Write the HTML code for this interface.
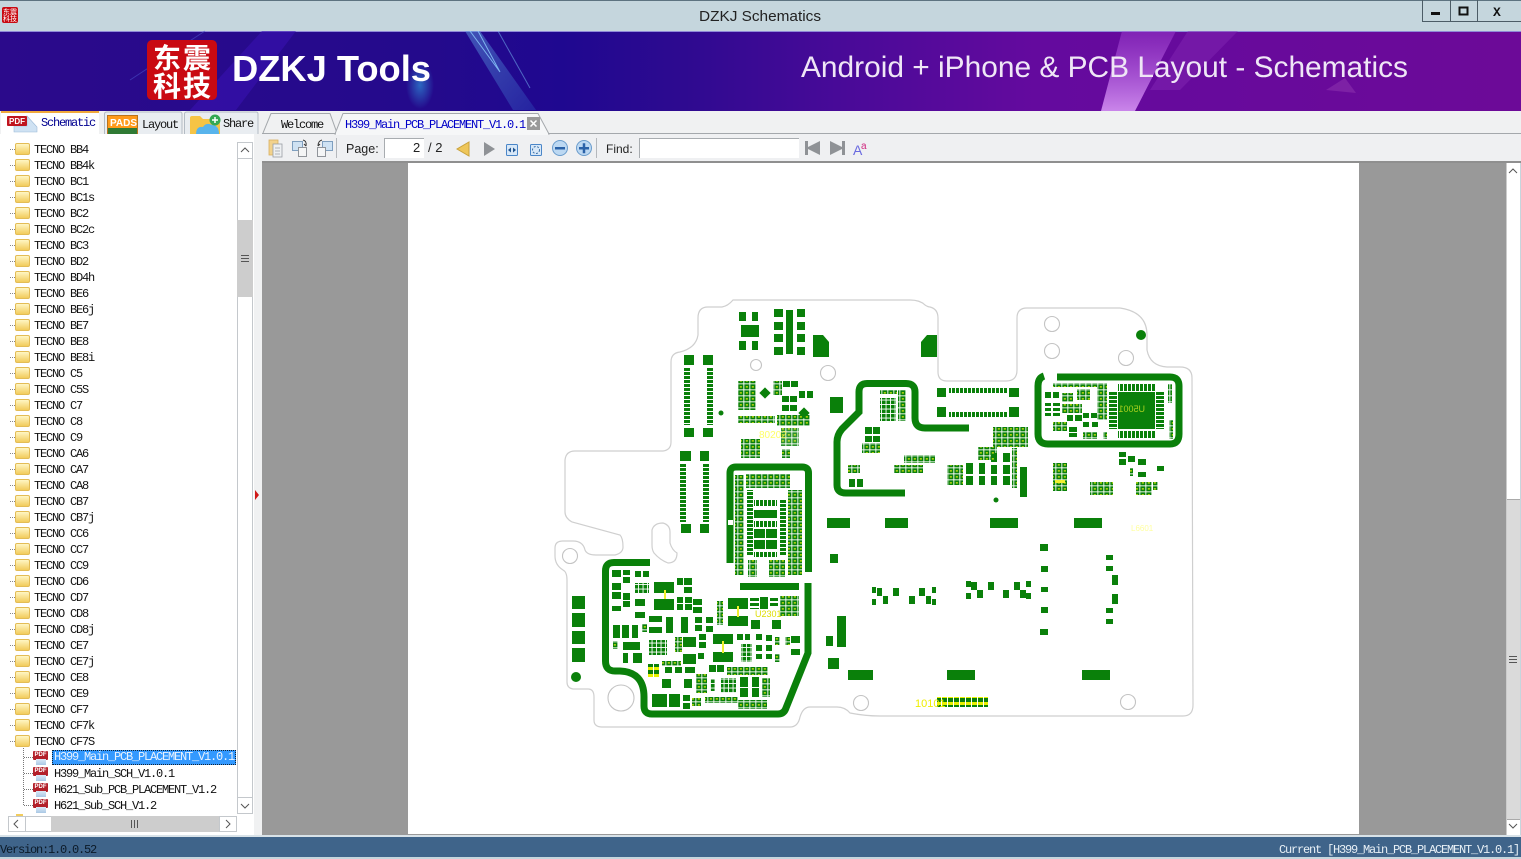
<!DOCTYPE html>
<html><head><meta charset="utf-8"><title>DZKJ Schematics</title>
<style>
html,body{margin:0;padding:0;width:1521px;height:859px;overflow:hidden;background:#f0f0f0}
#p{position:absolute;left:0;top:0;width:1521px;height:859px;overflow:hidden}
svg{position:absolute;left:0;top:0}
.a{position:absolute}
#tree{position:absolute;left:0;top:142px;width:237px;height:672px;overflow:hidden;font:12px/16px "Liberation Mono",monospace;letter-spacing:-1.2px;color:#111}
.r{height:16px;padding-left:34px;position:relative;white-space:pre}
.r:before{content:"";position:absolute;left:10px;top:7px;width:5px;border-top:1px dotted #888}
.r:after{content:"";position:absolute;left:15px;top:1px;width:13px;height:10px;background:linear-gradient(#fff6c4,#f2cc5c);border:1px solid #e3bc55;border-radius:2px}
.c{height:16px;padding-left:54px;position:relative;white-space:pre}
.c:before{content:"";position:absolute;left:24px;top:7px;width:9px;border-top:1px dotted #777}
.pdf{position:absolute;left:33px;top:1px;width:15px;height:9px;background:#b3202a;color:#fff;font:bold 6px/9px "Liberation Sans",sans-serif;letter-spacing:0;text-align:center;border-radius:1px}
.pg{position:absolute;left:36px;top:9px;width:10px;height:6px;background:linear-gradient(#dbe9f6,#a9c8e4)}
.s{background:#3399ff;color:#e8f2ff;outline:1px dotted #123;outline-offset:-1px;position:absolute;left:52px;top:0;width:182px;height:15px;padding-left:2px;line-height:15px}
.m{font:12px/16px "Liberation Mono",monospace;letter-spacing:-1.2px;white-space:pre;position:absolute}
.u{font:12.5px/16px "Liberation Sans",sans-serif;color:#222;position:absolute}
</style></head><body><div id="p">

<!-- title bar -->
<div class="a" style="left:0;top:0;width:1521px;height:31px;background:#c5d6dd;border-top:1px solid #5d7380;box-sizing:border-box"></div>

<!-- main chrome strips -->
<div class="a" style="left:0;top:111px;width:1521px;height:23px;background:#f0f1f2"></div>
<div class="a" style="left:0;top:134px;width:262px;height:702px;background:#fff"></div>
<div class="a" style="left:254px;top:134px;width:8px;height:702px;background:#f0f1f2"></div>
<div class="a" style="left:262px;top:134px;width:1259px;height:28px;background:#eff0f2"></div>
<div class="a" style="left:262px;top:133px;width:1259px;height:1px;background:#a4a8ac"></div>
<div class="a" style="left:262px;top:161px;width:1259px;height:2px;background:#8f8f8f"></div>
<div class="a" style="left:262px;top:163px;width:1244px;height:672px;background:#999"></div>
<div class="a" style="left:408px;top:163px;width:951px;height:671px;background:#fff"></div>
<div class="a" style="left:0;top:835px;width:1521px;height:2px;background:#d8e2e8"></div>
<div class="a" style="left:0;top:837px;width:1521px;height:20px;background:#3f648a"></div>
<div class="a" style="left:0;top:857px;width:1521px;height:2px;background:#c5d6dd"></div>
<div class="a" style="left:1506px;top:163px;width:15px;height:672px;background:#fff;border-left:1px solid #ccc;box-sizing:border-box"></div>
<div class="a" style="left:1507px;top:499px;width:13px;height:321px;background:#dadada;border-top:1px solid #aaa;border-bottom:1px solid #aaa;box-sizing:border-box"></div>
<div class="a" style="left:1520px;top:163px;width:1px;height:672px;background:#c5d6dd"></div>

<!-- tree -->
<div id="tree">
<div class="r">TECNO BB4</div><div class="r">TECNO BB4k</div><div class="r">TECNO BC1</div><div class="r">TECNO BC1s</div><div class="r">TECNO BC2</div><div class="r">TECNO BC2c</div><div class="r">TECNO BC3</div><div class="r">TECNO BD2</div><div class="r">TECNO BD4h</div><div class="r">TECNO BE6</div><div class="r">TECNO BE6j</div><div class="r">TECNO BE7</div><div class="r">TECNO BE8</div><div class="r">TECNO BE8i</div><div class="r">TECNO C5</div><div class="r">TECNO C5S</div><div class="r">TECNO C7</div><div class="r">TECNO C8</div><div class="r">TECNO C9</div><div class="r">TECNO CA6</div><div class="r">TECNO CA7</div><div class="r">TECNO CA8</div><div class="r">TECNO CB7</div><div class="r">TECNO CB7j</div><div class="r">TECNO CC6</div><div class="r">TECNO CC7</div><div class="r">TECNO CC9</div><div class="r">TECNO CD6</div><div class="r">TECNO CD7</div><div class="r">TECNO CD8</div><div class="r">TECNO CD8j</div><div class="r">TECNO CE7</div><div class="r">TECNO CE7j</div><div class="r">TECNO CE8</div><div class="r">TECNO CE9</div><div class="r">TECNO CF7</div><div class="r">TECNO CF7k</div><div class="r">TECNO CF7S</div>
<div class="c"><span class="pdf">PDF</span><span class="pg"></span><span class="s">H399_Main_PCB_PLACEMENT_V1.0.1</span></div>
<div class="c"><span class="pdf">PDF</span><span class="pg"></span>H399_Main_SCH_V1.0.1</div>
<div class="c"><span class="pdf">PDF</span><span class="pg"></span>H621_Sub_PCB_PLACEMENT_V1.2</div>
<div class="c"><span class="pdf">PDF</span><span class="pg"></span>H621_Sub_SCH_V1.2</div>
</div>
<div class="a" style="left:23px;top:748px;height:57px;border-left:1px dotted #777"></div>

<svg width="1521" height="859" viewBox="0 0 1521 859" xmlns="http://www.w3.org/2000/svg">
<defs>
<linearGradient id="bn" x1="0" x2="1" y1="0" y2="0">
<stop offset="0" stop-color="#2b0a8b"/><stop offset=".28" stop-color="#240a8c"/><stop offset=".37" stop-color="#1f0890"/><stop offset=".45" stop-color="#2e0a90"/><stop offset=".55" stop-color="#480a98"/><stop offset=".68" stop-color="#640a9e"/><stop offset="1" stop-color="#6c0a98"/>
</linearGradient>
<linearGradient id="pk" x1="0" x2="0" y1="0" y2="1"><stop offset="0" stop-color="#b050e0" stop-opacity=".35"/><stop offset="1" stop-color="#cf8cee" stop-opacity=".95"/></linearGradient>
<linearGradient id="tb" x1="0" x2="1" y1="0" y2="1"><stop offset="0" stop-color="#5f9fe0"/><stop offset="1" stop-color="#2a3cb0"/></linearGradient>
<radialGradient id="gl"><stop offset="0" stop-color="#2f8fd8" stop-opacity=".7"/><stop offset="1" stop-color="#2f8fd8" stop-opacity="0"/></radialGradient>
<pattern id="a" width="6" height="6" patternUnits="userSpaceOnUse"><rect x=".3" y=".3" width="5.100" height="5.100" fill="#0a800a"/><rect x="1.800" y="2" width="2.100" height="1.700" fill="#a6cf10"/></pattern>
<pattern id="b" width="4.500" height="4.500" patternUnits="userSpaceOnUse"><rect width="3.600" height="3.600" fill="#0a800a"/></pattern>
<pattern id="h" width="5" height="4" patternUnits="userSpaceOnUse"><rect width="5" height="3" fill="#0a800a"/></pattern>
<pattern id="v" width="4" height="5" patternUnits="userSpaceOnUse"><rect width="3" height="5" fill="#0a800a"/></pattern>
<pattern id="y" width="6" height="7" patternUnits="userSpaceOnUse"><rect width="5" height="7" fill="#0a800a"/><rect y="2" width="5" height="3" fill="#e8f000"/></pattern>
</defs>

<!-- banner -->
<rect x="0" y="31" width="1521" height="80" fill="url(#bn)"/>
<rect x="0" y="31" width="1521" height="1" fill="#8f8ad8"/>
<path d="M190 110 L262 31H296L236 110Z" fill="#3a12b4" opacity=".55"/>
<path d="M130 80 L205 31" stroke="#4a50c8" stroke-width="1" opacity=".6"/>
<ellipse cx="420" cy="85" rx="14" ry="24" fill="url(#gl)"/>
<path d="M465 31H480L536 110H513Z" fill="url(#tb)" opacity=".5"/>
<path d="M478 31L500 72 470 31" stroke="#8fd0ff" stroke-width="1" fill="none" opacity=".8"/>
<path d="M498 31L530 88" stroke="#7cc4f8" stroke-width="1" opacity=".5"/>
<path d="M1122 31H1176L1135 111H1101Z" fill="url(#pk)"/>
<path d="M1188 31H1238L1180 90H1150Z" fill="#8a2cb8" opacity=".4"/>
<path d="M1326 90L1345 78 1356 93Z" fill="#8a30ae" opacity=".6"/>
<rect x="147" y="40" width="70" height="60" rx="5" fill="#c90a12"/>
<g font-family="'Noto Sans CJK SC','WenQuanYi Zen Hei',sans-serif" font-size="28" font-weight="700" fill="#fff">
<text x="153" y="68">东</text><text x="183" y="68">震</text><text x="153" y="96">科</text><text x="183" y="96">技</text></g>
<text x="232" y="81" font-family="'Liberation Sans',sans-serif" font-weight="700" font-size="36" fill="#fff" textLength="199" lengthAdjust="spacingAndGlyphs">DZKJ Tools</text>
<text x="801" y="77" font-family="'Liberation Sans',sans-serif" font-size="30" fill="#efe6f6" textLength="607" lengthAdjust="spacingAndGlyphs">Android + iPhone &amp; PCB Layout - Schematics</text>

<!-- title -->
<rect x="2" y="7" width="16" height="16" rx="2" fill="#c90a12"/>
<g font-family="'Noto Sans CJK SC',sans-serif" font-size="7" fill="#fff"><text x="3" y="14">东</text><text x="10" y="14">震</text><text x="3" y="21">科</text><text x="10" y="21">技</text></g>
<text x="699" y="21" font-family="'Liberation Sans',sans-serif" font-size="15" fill="#222" textLength="122" lengthAdjust="spacingAndGlyphs">DZKJ Schematics</text>
<path d="M1422.5 0V21.5H1521M1450.5 0V21M1477.5 0V21" stroke="#4c5c66" fill="none"/>
<rect x="1431" y="12" width="9" height="3" fill="#111"/>
<rect x="1459.5" y="7.5" width="8" height="7" fill="none" stroke="#111" stroke-width="2"/>
<text x="1493" y="16" font-family="'Liberation Mono',monospace" font-weight="700" font-size="13" fill="#111">X</text>

<!-- left tabs -->
<path d="M1 134V113Q1 111 3 111H98Q99 111 99 113V134Z" fill="#fff"/>
<path d="M1 112H99" stroke="#f0a83c" stroke-width="2"/>
<path d="M27 116L37 127V132H14V126H27Z" fill="#cfe2f3" stroke="#9dbbd8" stroke-width=".6"/>
<rect x="7" y="116" width="20" height="10" rx="1" fill="#c0141e"/>
<text x="9" y="124" font-family="'Liberation Sans',sans-serif" font-weight="700" font-size="8" fill="#fff">PDF</text>
<path d="M104.5 134V114Q104.5 112 107 112H180Q182 112 182 114V134" fill="#e9edf1" stroke="#b4bcc4"/>
<rect x="107" y="115" width="31" height="19" fill="#b9731c"/>
<rect x="108" y="116" width="29" height="12" fill="#ff9a1a"/>
<text x="110" y="126" font-family="'Liberation Sans',sans-serif" font-weight="700" font-size="10" fill="#fff">PADS</text>
<rect x="108" y="128" width="29" height="6" fill="#2f7a34"/>
<path d="M184.500 134V114Q184.500 112 187 112H256Q258 112 258 114V134" fill="#e9edf1" stroke="#b4bcc4"/>
<path d="M190 134V118Q190 116 192 116H200L203 119H220V134Z" fill="#f6c445"/>
<path d="M196 134Q196 126 203 127 206 122 212 125 219 125 219 134Z" fill="#58b4ec"/>
<circle cx="215" cy="120" r="5.500" fill="#33a852"/><path d="M212 120H218M215 117V123" stroke="#fff" stroke-width="1.500"/>

<!-- doc tabs -->
<path d="M263 133L271 113.500H330L337 133" fill="#f0f1f2" stroke="#a4a8ac"/>
<path d="M335 134L343 113.500H538L549 134Z" fill="#f6f7f8" stroke="#a4a8ac"/>
<path d="M336 134H548" stroke="#f6f7f8" stroke-width="2"/>
<rect x="527" y="117" width="13" height="13" fill="#9a9a9a"/><path d="M530.500 120.500L536.500 126.500M536.500 120.500L530.500 126.500" stroke="#fff" stroke-width="1.500"/>

<!-- toolbar icons -->
<g>
<rect x="269" y="140" width="9" height="15" fill="#f2d28c" stroke="#d8b060" stroke-width=".8"/>
<rect x="273" y="144" width="9" height="13" fill="#eef0f2" stroke="#9a9ea4" stroke-width=".8"/>
<path d="M275 148H280M275 151H280M275 154H280" stroke="#b0b4b8"/>
<rect x="292.500" y="141.500" width="10" height="9" fill="#cfe2f3" stroke="#7f9fbf"/>
<rect x="298.500" y="147.500" width="8" height="9" fill="#f4f5f6" stroke="#90949a"/>
<path d="M303 140Q307 141 306 146M306 146L304 144" fill="none" stroke="#333"/>
<rect x="322.500" y="141.500" width="10" height="9" fill="#cfe2f3" stroke="#7f9fbf"/>
<rect x="317.500" y="147.500" width="8" height="9" fill="#f4f5f6" stroke="#90949a"/>
<path d="M322 140Q318 141 318 146M318 146L320 144" fill="none" stroke="#333"/>
<path d="M336.500 138V158M596.500 138V158" stroke="#b5b8bc"/>
<rect x="384" y="138" width="40" height="20" fill="#fff"/><path d="M384.500 158V138.500H424" stroke="#a8acb0" fill="none"/>
<path d="M469 142V156L457 149Z" fill="#eec65a" stroke="#c9a23c"/>
<path d="M484 142V156L495 149Z" fill="#8f9296"/>
<rect x="506.500" y="144.500" width="11" height="11" rx="1" fill="#d8e8f8" stroke="#4a86c8"/><path d="M508 150L511 147.500V152.500ZM516 150L513 147.500V152.500Z" fill="#22558f"/>
<rect x="530.500" y="144.500" width="11" height="11" rx="1" fill="#d8e8f8" stroke="#4a86c8"/><circle cx="536" cy="150" r="3.500" fill="none" stroke="#3a70a8" stroke-dasharray="2 1.500"/>
<circle cx="560" cy="148" r="7.500" fill="#bcd8f2" stroke="#6a9ccc"/><rect x="555" y="147" width="10" height="2.500" fill="#2a62a8"/>
<circle cx="584" cy="148" r="7.500" fill="#bcd8f2" stroke="#6a9ccc"/><path d="M579 148.200H589M584 143.200V153.200" stroke="#2a62a8" stroke-width="2.500"/>
<rect x="639" y="138" width="160" height="20" fill="#fff"/><path d="M639.500 158V138.500H799" stroke="#a8acb0" fill="none"/>
<path d="M805 141H808V147L820 141V155L808 149V155H805Z" fill="#8f9296"/>
<path d="M845 141H842V147L830 141V155L842 149V155H845Z" fill="#8f9296"/>
<text x="853" y="155" font-family="'Liberation Sans',sans-serif" font-size="14" fill="#6a6ae0">A</text>
<text x="861" y="149" font-family="'Liberation Sans',sans-serif" font-size="10" fill="#d02a80">a</text>
</g>

<!-- tree scrollbars -->
<rect x="237.500" y="142.500" width="15" height="671" fill="#fff" stroke="#c4c8cc"/>
<rect x="238" y="158" width="14" height="1" fill="#c4c8cc"/>
<rect x="238" y="797" width="14" height="1" fill="#c4c8cc"/>
<rect x="237" y="220" width="16" height="77" fill="#cdcdcd"/>
<path d="M241 255.500H249M241 258.500H249M241 261.500H249" stroke="#555"/>
<path d="M241 152L245 148 249 152M241 804L245 808 249 804" stroke="#555" fill="none"/>
<rect x="8.500" y="816.500" width="228" height="15" fill="#fff" stroke="#c4c8cc"/>
<rect x="51" y="816" width="168" height="16" fill="#cdcdcd"/>
<path d="M131.500 820V828M134.500 820V828M137.500 820V828" stroke="#555"/>
<path d="M25.500 817V831M219.500 817V831" stroke="#c4c8cc"/>
<path d="M18 820L14 824 18 828M226 820L230 824 226 828" stroke="#555" fill="none"/>
<rect x="16" y="814" width="7" height="2" fill="#f2cc5c"/>
<path d="M255 490L259 495 255 500Z" fill="#d01818"/>

<!-- viewer scrollbar -->
<path d="M1509 173L1513 169 1517 173M1509 824L1513 828 1517 824" stroke="#555" fill="none"/>
<path d="M1509 656.500H1517M1509 659.500H1517M1509 662.500H1517" stroke="#555"/>

<!-- PCB -->
<g style="filter:blur(.35px)">
<path fill="none" stroke="#cfcfcf" stroke-width="1.200" d="M733 300H910Q920 300 925 305 928 307 930 307 938 309 938 318V372Q938 381 947 381H1006Q1017 381 1017 370V318Q1017 308 1027 308H1120Q1147 312 1147 335V350Q1150 366 1167 367H1180Q1192 367 1192 378L1193 705Q1193 716 1183 716H880Q865 716 850 713 845 707 837 707H810Q803 707 800 717 798 727 790 727H602Q594 727 594 720V697Q594 689 588 689H573Q567 688 567 682V580Q567 572 563 570 555 565 555 556V548Q555 541 563 541H573Q583 541 585 550 587 555 596 555H615Q623 553 623 547 623 538 620 535L572 522Q565 518 565 512V460Q566 451 575 451H663Q671 450 671 442V362Q671 353 680 352 696 348 698 335V318Q698 307 708 307H722Q728 306 733 300Z"/>
<path fill="none" stroke="#cfcfcf" stroke-width="1.200" d="M652 530Q654 523 663 523 670 525 670 532V543Q672 550 677 553 677 563 668 563 660 560 654 553 652 550 652 545Z"/>
<g fill="#fff" stroke="#c4c4c4" stroke-width="1.100">
<circle cx="756" cy="365" r="5.500"/><circle cx="828" cy="373" r="7.500"/><circle cx="1052" cy="324" r="7.500"/><circle cx="1052" cy="351" r="7.500"/><circle cx="1126" cy="358" r="7.500"/><circle cx="570" cy="556" r="7.500"/><circle cx="621" cy="698" r="13"/><circle cx="861" cy="703" r="7.500"/><circle cx="1128" cy="702" r="7.500"/>
</g>
<circle cx="1141" cy="335" r="5" fill="#0a800a"/>
<circle cx="721" cy="413" r="2.500" fill="#0a800a"/>
<circle cx="576" cy="677" r="5" fill="#0a800a"/>
<circle cx="996" cy="500" r="2.500" fill="#0a800a"/>

<!-- thick traces -->
<g fill="none" stroke="#0a800a" stroke-width="7">
<path d="M730 563V473Q730 467 736 467H802Q808.500 467 808.500 473V572"/>
<path d="M650 562.500H614Q605.500 562.500 605.500 571V661Q605.500 671 615 671H620Q644 672 644 697V706Q644 714 652 714H778Q784 714 786 708L808 653V583"/>
<path d="M969 428H925Q915 428 915 418V392Q915 383.500 906 383.500H867Q859 383.500 859 392V412L842 429Q837 435 837 442V485Q837 493 846 493H905"/>
<path d="M1057 377H1170Q1179 377 1179 386V434Q1179 444 1170 444H1048Q1038 444 1038 434V386Q1038 378 1044 376"/>
</g>

<!-- solid pads -->
<path fill="#0a800a" d="M684 355h10v10h-10zM703 355h10v10h-10zM684 428h10v9h-10zM703 428h10v9h-10zM680 451h11v10h-11zM700 451h9v10h-9zM681 524h10v9h-10zM700 524h9v9h-9zM774 309h9v8h-9zM774 322h9v8h-9zM774 334h9v8h-9zM774 347h9v8h-9zM786 310h7v44h-7zM797 309h8v8h-8zM797 322h8v8h-8zM797 334h8v8h-8zM797 347h8v8h-8zM739 312h7v9h-7zM752 312h6v9h-6zM741 325h18v12h-18zM739 341h7v9h-7zM752 341h6v9h-6zM813 335h10l6 7v15h-16zM927 335h10v22h-16v-15zM783 381h7v6h-7zM791 381h7v6h-7zM782 396h7v6h-7zM790 396h7v6h-7zM782 405h7v6h-7zM790 405h7v6h-7zM799 391h6v7h-6zM807 391h6v7h-6zM830 397h13v16h-13z"/>
<path fill="#0a800a" d="M754 510h23v8h-23zM754 529h11v9h-11zM766 529h11v9h-11zM754 540h11v9h-11zM766 540h11v9h-11zM740 583h59v7h-59zM654 582h20v11h-20zM654 599h20v11h-20zM728 598h20v11h-20zM728 616h20v10h-20zM713 634h20v10h-20zM713 652h20v10h-20zM666 617h7v16h-7zM681 617h7v16h-7zM683 637h13v10h-13zM683 654h13v10h-13zM662 679h9v9h-9zM684 679h8v9h-8zM652 694h15v13h-15zM669 694h11v13h-11zM751 620h9v9h-9zM772 620h9v9h-9zM740 677h8v10h-8zM740 688h8v9h-8zM752 677h7v10h-7zM752 688h7v9h-7zM791 636h9v7h-9zM791 649h9v6h-9zM623 642h17v8h-17zM623 653h5v10h-5zM633 653h9v10h-9zM635 599h10v7h-10zM635 612h10v6h-10zM572 596h13v13h-13zM572 613h13v14h-13zM572 631h13v13h-13zM572 648h13v14h-13zM612 570h9v7h-9zM612 583h9v7h-9zM612 592h9v7h-9zM612 606h9v5h-9zM623 570h7v5h-7zM623 577h7v6h-7zM623 593h7v7h-7zM623 601h7v6h-7zM635 571h6v6h-6zM643 571h6v6h-6zM649 616h13v6h-13zM649 627h13v6h-13zM613 625h7v13h-7zM622 625h7v13h-7zM632 625h6v13h-6zM677 578h6v7h-6zM684 578h8v7h-8zM684 587h8v6h-8zM677 597h6v6h-6zM685 597h7v6h-7zM677 604h6v6h-6zM685 604h7v6h-7zM693 599h9v6h-9zM693 607h9v6h-9zM695 617h7v6h-7zM695 625h7v6h-7zM706 617h7v6h-7zM706 626h7v6h-7zM750 598h9v3h-9zM750 603h9v3h-9zM750 608h9v1h-9zM760 597h8v12h-8zM770 598h8v3h-8zM770 603h8v3h-8zM737 634h6v6h-6zM745 634h5v6h-5zM756 634h6v6h-6zM766 635h6v6h-6zM756 645h6v6h-6zM766 645h6v6h-6zM756 654h6v5h-6zM766 654h6v5h-6zM699 634h7v6h-7zM699 642h7v6h-7zM698 653h6v6h-6zM709 665h7v7h-7zM717 665h7v7h-7zM683 695h7v6h-7zM683 703h7v6h-7zM665 667h7v6h-7zM675 667h7v6h-7zM685 667h10v6h-10z"/>
<path fill="#0a800a" d="M827 518h23v10h-23zM830 554h8v9h-8zM837 616h9v31h-9zM826 636h7v10h-7zM828 658h11v11h-11zM848 670h25v10h-25zM885 518h23v10h-23zM990 518h28v10h-28zM1074 518h28v10h-28zM947 670h28v10h-28zM1082 670h28v10h-28zM1040 544h8v7h-8zM1041 566h7v6h-7zM1041 587h7v5h-7zM1041 607h7v6h-7zM1040 629h8v6h-8zM1106 555h7v5h-7zM1106 566h7v5h-7zM1112 575h6v10h-6zM1112 594h6v10h-6zM1106 608h7v5h-7zM1106 619h7v5h-7zM966 581h5v6h-5zM971 582h6v8h-6zM966 593h5v6h-5zM977 590h6v8h-6zM988 582h6v8h-6zM1003 590h6v8h-6zM1014 582h6v8h-6zM1020 590h6v8h-6zM1026 581h5v6h-5zM1026 593h5v6h-5zM883 596h5v8h-5zM893 588h6v8h-6zM909 596h6v8h-6zM919 588h6v8h-6zM926 596h5v8h-5zM932 587h4v6h-4zM932 599h4v6h-4zM872 587h4v6h-4zM877 588h5v8h-5zM872 599h4v6h-4z"/>
<path fill="#0a800a" d="M937 388h9v9h-9zM1009 388h10v9h-10zM937 407h9v10h-9zM1009 407h10v10h-10zM1118 392h37v37h-37zM1020 467h7v30h-7zM966 463h7v11h-7zM966 476h7v9h-7zM979 463h6v11h-6zM979 476h6v9h-6zM991 453h6v9h-6zM991 465h6v9h-6zM991 476h6v9h-6zM1003 453h7v9h-7zM1003 465h7v9h-7zM1003 476h7v9h-7zM1045 392h6v6h-6zM1053 392h6v6h-6zM1045 403h6v3h-6zM1045 408h6v3h-6zM1045 413h6v3h-6zM1053 403h7v3h-7zM1053 408h7v3h-7zM1053 413h7v3h-7zM1067 415h6v6h-6zM1075 415h7v6h-7zM1083 413h6v5h-6zM1091 413h6v5h-6zM1083 422h6v5h-6zM1092 422h6v5h-6zM1069 427h8v5h-8zM1069 433h8v4h-8zM1119 452h7v5h-7zM1119 459h7v6h-7zM1128 456h7v6h-7zM1138 459h8v6h-8zM1138 472h8v5h-8zM1157 466h7v5h-7zM865 427h7v7h-7zM873 427h7v7h-7zM865 436h7v6h-7zM873 436h7v6h-7zM849 479h6v8h-6zM857 479h6v8h-6z"/>
<g fill="#0a800a"><rect x="761" y="389" width="8" height="8" transform="rotate(45 765 393)"/><rect x="800" y="409" width="8" height="8" transform="rotate(45 804 413)"/></g>

<!-- combs -->
<rect x="684" y="368" width="6" height="57" fill="url(#h)"/><rect x="707" y="368" width="6" height="57" fill="url(#h)"/>
<rect x="680" y="464" width="6" height="58" fill="url(#h)"/><rect x="703" y="464" width="6" height="58" fill="url(#h)"/>
<rect x="949" y="388" width="58" height="5" fill="url(#v)"/><rect x="949" y="412" width="58" height="5" fill="url(#v)"/>
<rect x="1118" y="384" width="37" height="7" fill="url(#v)"/><rect x="1118" y="431" width="37" height="7" fill="url(#v)"/>
<rect x="1109" y="392" width="8" height="37" fill="url(#h)"/><rect x="1156" y="392" width="8" height="37" fill="url(#h)"/>
<rect x="747" y="490" width="6" height="65" fill="url(#h)"/>
<rect x="754" y="521" width="23" height="6" fill="url(#v)"/><rect x="754" y="552" width="23" height="5" fill="url(#v)"/><rect x="754" y="500" width="23" height="6" fill="url(#v)"/>
<rect x="780" y="500" width="6" height="55" fill="url(#h)"/>

<!-- pad grids -->
<g fill="url(#a)">
<rect x="738" y="381" width="18" height="29"/><rect x="773" y="381" width="9" height="14"/><rect x="777" y="415" width="33" height="11"/><rect x="738" y="416" width="37" height="7"/><rect x="741" y="439" width="19" height="19"/><rect x="782" y="449" width="8" height="9"/><rect x="781" y="428" width="18" height="18" opacity=".85"/>
<rect x="735" y="475" width="9" height="100"/><rect x="746" y="474" width="44" height="14"/><rect x="788" y="490" width="14" height="85"/><rect x="748" y="560" width="9" height="17"/><rect x="769" y="560" width="16" height="17"/>
<rect x="675" y="637" width="7" height="15"/><rect x="696" y="674" width="11" height="19"/><rect x="738" y="700" width="29" height="9"/><rect x="780" y="596" width="19" height="20"/><rect x="717" y="601" width="6" height="24"/><rect x="642" y="624" width="5" height="8"/><rect x="613" y="641" width="5" height="8"/><rect x="662" y="661" width="19" height="5"/><rect x="727" y="667" width="41" height="8"/><rect x="705" y="697" width="33" height="6"/><rect x="692" y="698" width="9" height="8"/><rect x="762" y="678" width="8" height="19"/><rect x="775" y="637" width="5" height="8"/><rect x="785" y="637" width="5" height="8"/><rect x="775" y="654" width="5" height="8"/>
<rect x="880" y="390" width="17" height="4"/><rect x="898" y="390" width="8" height="31"/><rect x="904" y="455" width="31" height="8"/><rect x="894" y="465" width="29" height="8"/><rect x="848" y="465" width="12" height="8"/><rect x="862" y="443" width="18" height="10"/>
<rect x="993" y="427" width="35" height="20"/><rect x="978" y="447" width="19" height="13"/><rect x="947" y="465" width="16" height="20"/><rect x="1012" y="448" width="5" height="40"/>
<rect x="1053" y="383" width="44" height="4"/><rect x="1077" y="389" width="13" height="11"/><rect x="1097" y="383" width="10" height="37"/><rect x="1062" y="393" width="11" height="9"/><rect x="1062" y="404" width="20" height="9"/><rect x="1053" y="422" width="14" height="9"/><rect x="1083" y="432" width="14" height="7"/><rect x="1103" y="432" width="4" height="7"/><rect x="1168" y="384" width="4" height="19"/><rect x="1169" y="420" width="4" height="19"/>
<rect x="1053" y="463" width="14" height="28"/><rect x="1090" y="482" width="23" height="13"/><rect x="1136" y="482" width="16" height="13"/><rect x="1153" y="482" width="5" height="8"/><rect x="1130" y="468" width="3" height="8"/>
</g>
<g fill="url(#b)">
<rect x="880" y="398" width="16" height="23"/><rect x="635" y="583" width="14" height="10"/><rect x="649" y="640" width="18" height="15"/><rect x="741" y="644" width="11" height="18"/><rect x="721" y="678" width="15" height="15"/><rect x="710" y="679" width="5" height="12"/>
</g>
<rect x="648" y="664" width="11" height="13" fill="url(#y)"/>
<rect x="937" y="697" width="51" height="10" fill="url(#y)"/>
<rect x="728" y="520" width="5" height="5" fill="#fff"/>

<!-- silk text -->
<g font-family="'Liberation Sans',sans-serif" fill="#ffff40">
<text x="759" y="438" font-size="10" opacity=".8">80202</text>
<text x="915" y="707" font-size="11" fill="#eeee00">10101</text>
<text x="1131" y="531" font-size="8" opacity=".5">L6601</text>
<text x="755" y="617" font-size="9" fill="#dddd00">U2301</text>
</g>
<text transform="translate(1145 408) scale(-1 1)" x="0" y="4" font-family="'Liberation Sans',sans-serif" font-size="9" fill="#a8d020">U5001</text>
<g fill="#f0f030"><rect x="664" y="590" width="2" height="9"/><rect x="737" y="606" width="2" height="11"/><rect x="722" y="641" width="2" height="12"/><rect x="1055" y="480" width="10" height="3"/></g>
</g>
</svg>

<!-- status + labels (above svg) -->
<div class="m" style="left:0;top:842px;color:#0c1a28">Version:1.0.0.52</div>
<div class="m" style="right:2px;top:842px;color:#e8f0f6">Current [H399_Main_PCB_PLACEMENT_V1.0.1]</div>
<div class="m" style="left:345px;top:117px;color:#0000c8">H399_Main_PCB_PLACEMENT_V1.0.1</div>
<div class="m" style="left:281px;top:117px;color:#111">Welcome</div>
<div class="m" style="left:41px;top:115px;color:#000090">Schematic</div>
<div class="m" style="left:142px;top:117px;color:#111">Layout</div>
<div class="m" style="left:223px;top:116px;color:#111">Share</div>
<div class="u" style="left:346px;top:141px">Page:</div>
<div class="u" style="left:413px;top:140px;font-size:13px">2</div>
<div class="u" style="left:428px;top:140px;font-size:13px">/ 2</div>
<div class="u" style="left:606px;top:141px;font-size:12px">Find:</div>
</div></body></html>
